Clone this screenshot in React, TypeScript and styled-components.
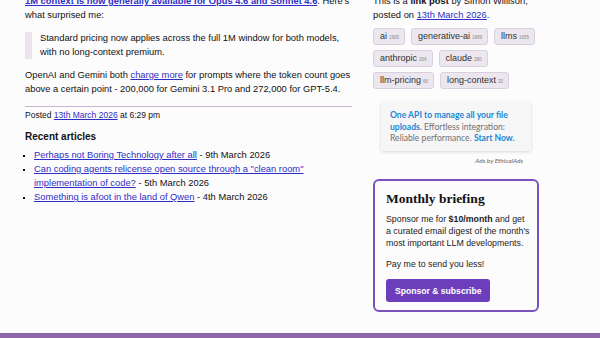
import * as React from "react"
import styled, { createGlobalStyle } from "styled-components"

const GlobalStyle = createGlobalStyle`
  html, body {
    margin: 0;
    padding: 0;
    background: #fdfcfd;
    color: #111;
    font-family: "Liberation Sans", Arial, sans-serif;
    overflow: hidden;
  }
`

const Screen = styled.div`
  height: 338px;
  display: flex;
  flex-direction: column;
  overflow: hidden;
`

const Columns = styled.div`
  flex: 1;
  display: flex;
  gap: 21px;
  padding: 0 25px;
  margin-top: -5px;
`

const Main = styled.main`
  width: 327px;
  font-size: 9.35px;
  line-height: 13.5px;

  p {
    margin: 0 0 10px;
  }
`

const Link = styled.a<{ $bold?: boolean }>`
  color: #2d2fc4;
  text-decoration: underline;
  font-weight: ${(p) => (p.$bold ? 700 : 400)};
`

const Quote = styled.blockquote`
  margin: 0 0 10px;
  padding: 0 0 0 8px;
  border-left: 7px solid #ebe4ee;
`

const Rule = styled.hr`
  border: 0;
  border-top: 1px solid #c9b4d6;
  margin: 8px 0 2px;
`

const Meta = styled.div`
  font-size: 8.5px;
  line-height: 12px;
`

const Heading = styled.h3`
  font-size: 10px;
  font-weight: 700;
  margin: 9px 0 4px;
  line-height: 14px;
`

const Articles = styled.ul`
  list-style: square;
  margin: 0;
  padding-left: 9px;

  li {
    line-height: 14px;
  }
  li::marker {
    font-size: 8px;
  }
`

const Side = styled.aside`
  width: 166px;
  font-size: 9.35px;
  line-height: 13.5px;
  display: flex;
  flex-direction: column;
`

const Tags = styled.div`
  display: flex;
  flex-wrap: wrap;
  gap: 5px 6px;
  margin: 6px -8px 0 0;
`

const Tag = styled.a`
  display: inline-flex;
  align-items: baseline;
  gap: 2px;
  padding: 0 5px 0 6px;
  height: 17px;
  box-sizing: border-box;
  background: #ece6ef;
  border: 1px solid #d9cfdf;
  border-radius: 3px;
  color: #333;
  font-size: 9px;
  line-height: 15px;
  text-decoration: none;
`

const Count = styled.span`
  font-size: 4.5px;
  color: #888;
`

const Ad = styled.div`
  margin: 13px 8px 0 8px;
  padding: 8px 9px 6px 9px;
  background: #f6f6f7;
  box-shadow: 0 1px 3px rgba(0, 0, 0, 0.15);
  font-family: Lato, "Open Sans", sans-serif;
  font-size: 8.6px;
  line-height: 11.5px;
  color: #707070;

  b {
    color: #1b87d3;
    font-weight: 700;
  }
`

const AdCredit = styled.div`
  margin: 3px 16px 0 0;
  text-align: right;
  font-family: Lato, "Open Sans", sans-serif;
  font-style: italic;
  font-size: 6.5px;
  color: #666;
`

const Briefing = styled.div`
  margin-top: 12px;
  border: 2px solid #7a52c0;
  border-radius: 6px;
  padding: 9px 7px 8px 11px;
  font-size: 8.8px;
  line-height: 12px;
  color: #222;

  p {
    margin: 0 0 9px;
  }
`

const BriefingTitle = styled.h2`
  font-family: "Liberation Serif", "DejaVu Serif", serif;
  font-size: 13.5px;
  font-weight: 700;
  margin: 0 0 5px;
  line-height: 18px;
  color: #111;
`

const Button = styled.button`
  background: #6c3ebc;
  color: #fff;
  border: 0;
  border-radius: 3px;
  font-family: "Liberation Sans", Arial, sans-serif;
  font-weight: 700;
  font-size: 8.6px;
  height: 23px;
  padding: 0 9px;
  margin-top: 0;
`

const Footer = styled.div`
  height: 5px;
  background: #8f66aa;
`

const articles = [
  { title: "Perhaps not Boring Technology after all", date: "9th March 2026" },
  {
    title: 'Can coding agents relicense open source through a "clean room" implementation of code?',
    date: "5th March 2026",
  },
  { title: "Something is afoot in the land of Qwen", date: "4th March 2026" },
]

const tags = [
  ["ai", "1905"],
  ["generative-ai", "1689"],
  ["llms", "1655"],
  ["anthropic", "264"],
  ["claude", "280"],
  ["llm-pricing", "66"],
  ["long-context", "20"],
]

export default function App() {
  return (
    <Screen>
      <GlobalStyle />
      <Columns>
        <Main>
          <p>
            <Link $bold href="#">
              1M context is now generally available for Opus 4.6 and Sonnet 4.6
            </Link>
            . Here's what surprised me:
          </p>
          <Quote>
            Standard pricing now applies across the full 1M window for both models, with no
            long-context premium.
          </Quote>
          <p>
            OpenAI and Gemini both <Link href="#">charge more</Link> for prompts where the token
            count goes above a certain point - 200,000 for Gemini 3.1 Pro and 272,000 for GPT-5.4.
          </p>
          <Rule />
          <Meta>
            Posted <Link href="#">13th March 2026</Link> at 6:29 pm
          </Meta>
          <Heading>Recent articles</Heading>
          <Articles>
            {articles.map((a) => (
              <li key={a.title}>
                <Link href="#">{a.title}</Link> - {a.date}
              </li>
            ))}
          </Articles>
        </Main>
        <Side>
          <div>
            This is a <b>link post</b> by Simon Willison,
            <br />
            posted on <Link href="#">13th March 2026</Link>.
          </div>
          <Tags>
            {tags.map(([name, n]) => (
              <Tag key={name} href="#">
                {name}
                <Count>{n}</Count>
              </Tag>
            ))}
          </Tags>
          <Ad>
            <b>One API to manage all your file uploads.</b> Effortless integration: Reliable
            performance. <b>Start Now.</b>
          </Ad>
          <AdCredit>Ads by EthicalAds</AdCredit>
          <Briefing>
            <BriefingTitle>Monthly briefing</BriefingTitle>
            <p>
              Sponsor me for <b>$10/month</b> and get a curated email digest of the month's most
              important LLM developments.
            </p>
            <p>Pay me to send you less!</p>
            <Button>Sponsor &amp; subscribe</Button>
          </Briefing>
        </Side>
      </Columns>
      <Footer />
    </Screen>
  )
}
